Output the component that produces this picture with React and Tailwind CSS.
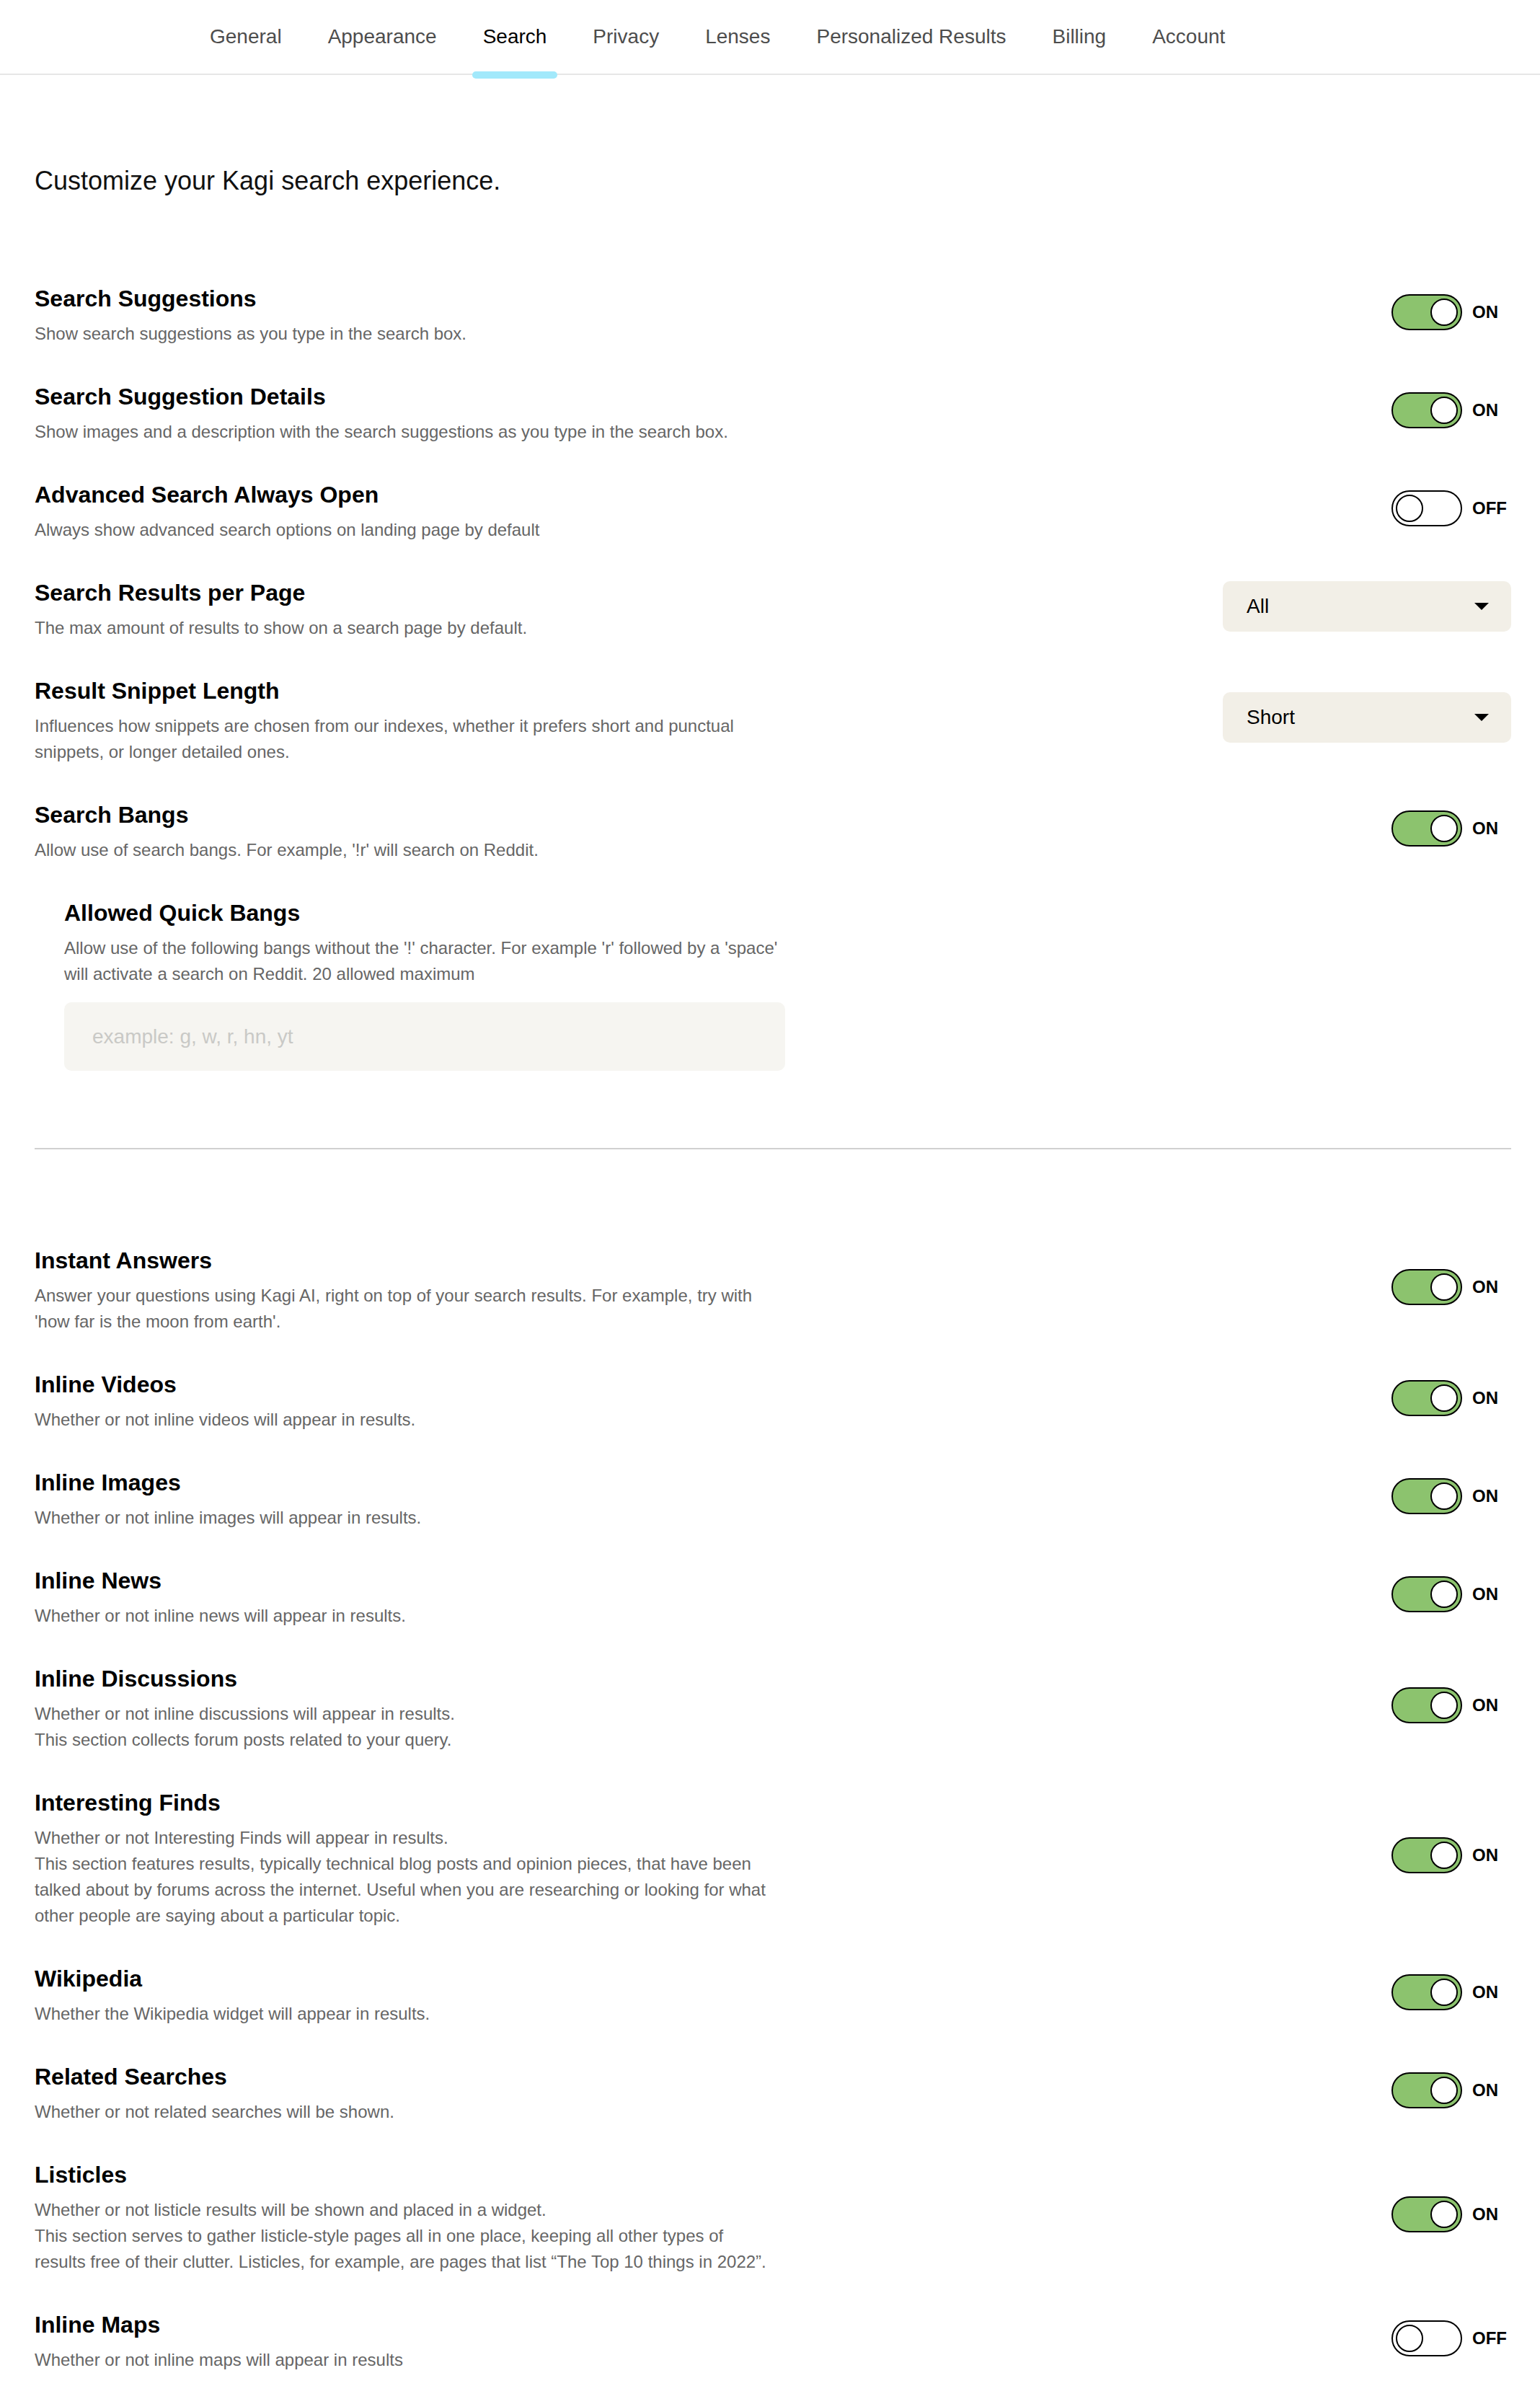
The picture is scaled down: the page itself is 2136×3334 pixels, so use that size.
import { useState } from 'react';

const tabs = ['General', 'Appearance', 'Search', 'Privacy', 'Lenses', 'Personalized Results', 'Billing', 'Account'];

function Toggle({ on }) {
  return (
    <div className="flex items-center gap-[14px] mb-[6px]">
      <div
        className={`w-[98px] h-[50px] rounded-full border-2 border-black flex items-center px-[4px] ${
          on ? 'bg-[#8cc36e] justify-end' : 'bg-white justify-start'
        }`}
      >
        <div className="w-[38px] h-[38px] rounded-full bg-white border-2 border-black" />
      </div>
      <span className="w-[54px] text-[24px] font-bold text-black">{on ? 'ON' : 'OFF'}</span>
    </div>
  );
}

function Select({ value }) {
  return (
    <div className="w-[400px] h-[70px] mb-[6px] rounded-[10px] bg-[#f2efe7] flex items-center justify-between pl-[33px] pr-[31px] text-[28px] text-black">
      <span>{value}</span>
      <svg width="20" height="10" viewBox="0 0 20 10">
        <path d="M0 0 L20 0 L10 10 Z" fill="#000" />
      </svg>
    </div>
  );
}

function Row({ title, desc, control }) {
  return (
    <div className="flex items-center justify-between">
      <div className="w-[1030px]">
        <h3 className="text-[32px] leading-[48px] font-bold text-black">{title}</h3>
        <p className="mt-[7px] text-[24px] leading-[36px] text-[#666666]">{desc}</p>
      </div>
      {control}
    </div>
  );
}

export default function App() {
  const [active] = useState('Search');

  return (
    <div className="min-h-screen bg-white font-['Liberation_Sans',Arial,sans-serif]">
      {/* Settings tabs */}
      <nav className="h-[104px] border-b-2 border-[#e6e6e6] flex pl-[259px]">
        {tabs.map((t) => (
          <button
            key={t}
            className={`relative h-[102px] px-[32px] text-[28px] ${
              t === active ? 'text-black' : 'text-[#4d4d4d]'
            }`}
          >
            {t}
            {t === active && (
              <span className="absolute left-[17px] right-[17px] bottom-[-7px] h-[10px] rounded-full bg-[#a2e9fb]" />
            )}
          </button>
        ))}
      </nav>

      <main className="pl-[48px] pr-[40px] pt-[125px] pb-[40px]">
        <p className="text-[36px] leading-[44px] text-[#111]">Customize your Kagi search experience.</p>

        <div className="mt-[117px] flex flex-col gap-[45px]">
          <Row
            title="Search Suggestions"
            desc="Show search suggestions as you type in the search box."
            control={<Toggle on />}
          />
          <Row
            title="Search Suggestion Details"
            desc="Show images and a description with the search suggestions as you type in the search box."
            control={<Toggle on />}
          />
          <Row
            title="Advanced Search Always Open"
            desc="Always show advanced search options on landing page by default"
            control={<Toggle on={false} />}
          />
          <Row
            title="Search Results per Page"
            desc="The max amount of results to show on a search page by default."
            control={<Select value="All" />}
          />
          <Row
            title="Result Snippet Length"
            desc="Influences how snippets are chosen from our indexes, whether it prefers short and punctual snippets, or longer detailed ones."
            control={<Select value="Short" />}
          />
          <Row
            title="Search Bangs"
            desc="Allow use of search bangs. For example, '!r' will search on Reddit."
            control={<Toggle on />}
          />

          {/* Quick bangs, nested under Search Bangs */}
          <div className="pl-[41px]">
            <h3 className="text-[32px] leading-[48px] font-bold text-black">Allowed Quick Bangs</h3>
            <p className="w-[1000px] mt-[7px] text-[24px] leading-[36px] text-[#666666]">
              Allow use of the following bangs without the '!' character. For example 'r' followed by a 'space' will
              activate a search on Reddit. 20 allowed maximum
            </p>
            <input
              type="text"
              placeholder="example: g, w, r, hn, yt"
              className="mt-[21px] w-[1000px] h-[95px] rounded-[10px] bg-[#f6f5f1] px-[39px] text-[28px] text-black placeholder:text-[#c9c9c6] outline-none"
            />
          </div>
        </div>

        <hr className="mt-[107px] border-0 h-[2px] bg-[#d0d0d0]" />

        <div className="mt-[130px] flex flex-col gap-[45px]">
          <Row
            title="Instant Answers"
            desc="Answer your questions using Kagi AI, right on top of your search results. For example, try with 'how far is the moon from earth'."
            control={<Toggle on />}
          />
          <Row
            title="Inline Videos"
            desc="Whether or not inline videos will appear in results."
            control={<Toggle on />}
          />
          <Row
            title="Inline Images"
            desc="Whether or not inline images will appear in results."
            control={<Toggle on />}
          />
          <Row
            title="Inline News"
            desc="Whether or not inline news will appear in results."
            control={<Toggle on />}
          />
          <Row
            title="Inline Discussions"
            desc={
              <>
                Whether or not inline discussions will appear in results.
                <br />
                This section collects forum posts related to your query.
              </>
            }
            control={<Toggle on />}
          />
          <Row
            title="Interesting Finds"
            desc={
              <>
                Whether or not Interesting Finds will appear in results.
                <br />
                This section features results, typically technical blog posts and opinion pieces, that have been talked
                about by forums across the internet. Useful when you are researching or looking for what other people are
                saying about a particular topic.
              </>
            }
            control={<Toggle on />}
          />
          <Row
            title="Wikipedia"
            desc="Whether the Wikipedia widget will appear in results."
            control={<Toggle on />}
          />
          <Row
            title="Related Searches"
            desc="Whether or not related searches will be shown."
            control={<Toggle on />}
          />
          <Row
            title="Listicles"
            desc={
              <>
                Whether or not listicle results will be shown and placed in a widget.
                <br />
                This section serves to gather listicle-style pages all in one place, keeping all other types of results
                free of their clutter. Listicles, for example, are pages that list “The Top 10 things in 2022”.
              </>
            }
            control={<Toggle on />}
          />
          <Row
            title="Inline Maps"
            desc="Whether or not inline maps will appear in results"
            control={<Toggle on={false} />}
          />
        </div>
      </main>
    </div>
  );
}
